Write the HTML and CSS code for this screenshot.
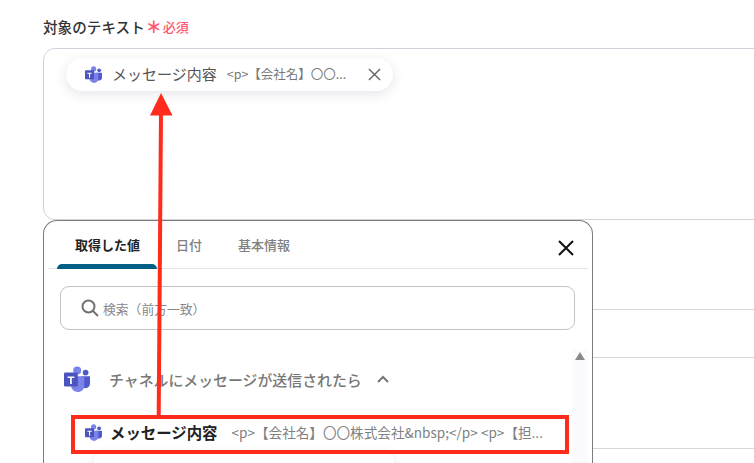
FILE: index.html
```html
<!DOCTYPE html>
<html lang="ja">
<head>
<meta charset="utf-8">
<title>対象のテキスト</title>
<link rel="stylesheet" href="styles.css">
</head>
<body>
<svg class="defs" width="0" height="0" aria-hidden="true">
  <symbol id="teams" viewBox="0 0 26 26">
    <circle cx="21.6" cy="6.6" r="2.9" fill="#5059c9"/>
    <path d="M17 10.2h8.6c.3 0 .4.2.4.4v7c0 2.8-2 4.6-4.4 4.6-1.8 0-3.4-.9-4.6-2.4z" fill="#5059c9"/>
    <circle cx="13.2" cy="4.4" r="4" fill="#7b83eb"/>
    <path d="M7.2 10.2h12.3c.5 0 .8.3.8.8v9c0 3.400-3 6-6.400 6-3.600 0-6.700-2.800-6.700-6z" fill="#7b83eb"/>
    <rect x="0" y="6.600" width="13.800" height="13.800" rx="1.200" fill="#4b53bc"/>
    <path d="M3.600 10.400h6.700v1.500H7.800v6H6.100v-6H3.600z" fill="#fff"/>
  </symbol>
</svg>

<main class="page">
  <h2 class="field-label">対象のテキスト<span class="req-star">＊</span><span class="req-text">必須</span></h2>
  <div class="text-box">
    <div class="chip">
      <svg class="icon-small"><use href="#teams"/></svg>
      <span class="chip-name">メッセージ内容</span>
      <span class="chip-value">&lt;p&gt;【会社名】〇〇...</span>
      <svg class="chip-close" viewBox="0 0 14 14"><path d="M1 1l12 12M13 1L1 13"/></svg>
    </div>
  </div>
  <div class="bg-row bg-row-a"></div>
  <div class="bg-row bg-row-b"></div>
  <div class="bg-row bg-row-c"></div>
</main>

<section class="panel">
  <div class="tabs">
    <span class="tab tab-active">取得した値</span>
    <span class="tab">日付</span>
    <span class="tab">基本情報</span>
    <svg class="panel-close" viewBox="0 0 16 16"><path d="M1 1l14 14M15 1L1 15"/></svg>
  </div>
  <div class="search">
    <svg class="search-icon" viewBox="0 0 18 18"><circle cx="7.500" cy="7.500" r="6"/><path d="M12 12l5 5"/></svg>
    <span>検索（前方一致）</span>
  </div>
  <div class="list">
    <div class="scroll-track"></div>
    <div class="group-head">
      <svg class="icon-large"><use href="#teams"/></svg>
      <span class="group-title">チャネルにメッセージが送信されたら</span>
      <svg class="chevron" viewBox="0 0 12 8"><path d="M1 7l5-5 5 5"/></svg>
    </div>
    <div class="result">
      <svg class="icon-small"><use href="#teams"/></svg>
      <span class="result-name">メッセージ内容</span>
      <span class="result-value">&lt;p&gt;【会社名】〇〇株式会社&amp;nbsp;&lt;/p&gt; &lt;p&gt;【担...</span>
    </div>
    <div class="result-next"></div>
    <svg class="scroll-up" viewBox="0 0 10 8"><path d="M5 0l5 8H0z"/></svg>
  </div>
</section>

<div class="highlight"></div>
<svg class="arrow" viewBox="0 0 754 463"><path class="arrow-line" d="M158.700 416L161 112"/><path class="arrow-head" d="M161 93L172.500 115.500H150z"/></svg>
</body>
</html>
```
FILE: styles.css
```css
* { box-sizing: border-box; }
html, body { margin: 0; height: 100%; overflow: hidden; background: #fff; }
body { font-family: "Noto Sans CJK JP", "Noto Sans", sans-serif; color: #333; position: relative; }
.defs { position: absolute; }

.page { padding: 16px 0 0 43px; }
.field-label { display: flex; align-items: center; margin: 0 0 11px; height: 21px; font-size: 14.600px; line-height: 21px; font-weight: 500; color: #333; white-space: nowrap; }
.req-star { color: #ff5a70; font-size: 16px; margin-left: 1px; font-weight: 900; }
.req-text { color: #ff5a70; font-size: 13px; font-weight: 500; margin-left: 1px; }

.text-box { height: 172px; margin-right: -20px; border: 1px solid #d3d2dc; border-radius: 12px; padding: 9px 0 0 22px; }
.chip { display: flex; align-items: center; width: 327px; height: 33px; padding-left: 19px; border-radius: 17px; background: #fff; box-shadow: 0 3px 12px rgba(70, 70, 110, .14); }
.icon-small { width: 17px; height: 17px; flex: none; }
.chip-name { margin: 0 0 2px 10px; font-size: 15px; color: #555; white-space: nowrap; }
.chip-value { margin: 0 0 2px 10px; font-size: 12.500px; color: #777; white-space: nowrap; width: 121px; }
.chip-close { width: 13px; height: 13px; margin-left: 20px; fill: none; stroke: #666; stroke-width: 1.500; }

.bg-row { border-bottom: 1px solid #d5d5da; margin-right: -20px; }
.bg-row-a { height: 90px; }
.bg-row-b { height: 48px; }
.bg-row-c { height: 91px; }

.panel { position: absolute; left: 43px; top: 220px; width: 550px; height: 243px; overflow: hidden; background: #fff; border: 1px solid #7c7c7c; border-bottom: 0; border-radius: 14px 14px 0 0; padding: 0 4px; }
.tabs { position: relative; display: flex; align-items: center; gap: 36px; height: 48px; padding-left: 27px; border-bottom: 1px solid #e4e4e8; }
.tab { font-size: 13px; font-weight: 500; color: #808080; white-space: nowrap; }
.tab-active { color: #222; font-weight: 700; }
.tab-active::after { content: ""; position: absolute; left: 9px; bottom: -1px; width: 100px; height: 5px; background: #005f85; border-radius: 5px 5px 0 0; }
.panel-close { position: absolute; right: 14px; top: 19px; width: 16px; height: 16px; fill: none; stroke: #111; stroke-width: 2; }

.search { display: flex; align-items: center; gap: 4px; height: 44px; margin: 17px 13px 0 12px; padding-left: 20px; border: 1px solid #c4c4c4; border-radius: 9px; font-size: 12.800px; color: #888; white-space: nowrap; }
.search-icon { width: 18px; height: 18px; fill: none; stroke: #707070; stroke-width: 2; }

.list { position: relative; padding: 36px 0 0 16px; }
.scroll-track { position: absolute; right: 0; top: 20px; width: 16px; height: 200px; background: #fbfafd; }
.group-head { position: relative; display: flex; align-items: center; height: 26px; }
.icon-large { width: 26px; height: 26px; flex: none; }
.group-title { margin-left: 19px; font-size: 14.900px; font-weight: 500; color: #777; white-space: nowrap; }
.chevron { width: 12px; height: 8px; margin-left: 15px; fill: none; stroke: #777; stroke-width: 2; }
.result { position: relative; display: flex; align-items: center; height: 31px; margin: 25px 0 0 21px; white-space: nowrap; }
.result-name { margin: 0 0 2px 8px; font-size: 15.400px; font-weight: 700; color: #222; }
.result-value { margin: 0 0 1px 14px; font-size: 13.600px; color: #808080; }
.result-next { width: 300px; height: 20px; margin: 5px 0 0 30px; border-radius: 8px; box-shadow: 0 -1px 8px rgba(70, 70, 110, .1); }
.scroll-up { position: absolute; right: 3px; top: 22px; width: 10px; height: 8px; fill: #8a8a8a; }

.highlight { position: absolute; left: 71px; top: 415px; width: 498px; height: 39px; border: 4px solid #ff2b1c; }
.arrow { position: absolute; left: 0; top: 0; width: 754px; height: 463px; pointer-events: none; }
.arrow-line { fill: none; stroke: #ff2b1c; stroke-width: 4; }
.arrow-head { fill: #ff2b1c; }
```
